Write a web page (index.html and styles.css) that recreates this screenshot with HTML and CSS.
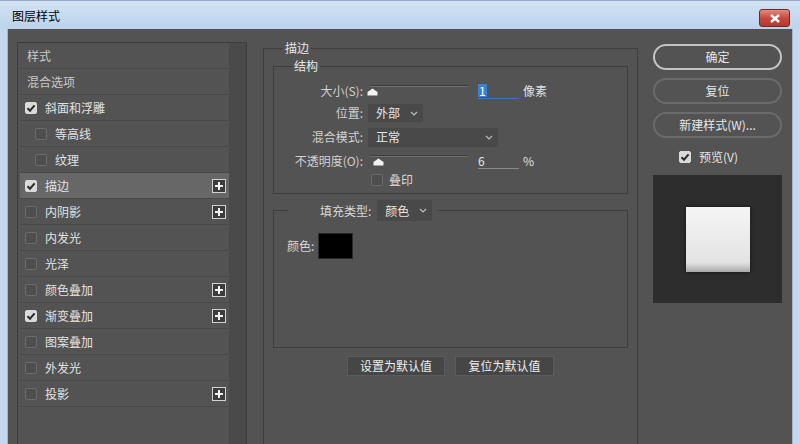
FILE: index.html
```html
<!DOCTYPE html>
<html lang="zh-CN">
<head>
<meta charset="utf-8">
<title>图层样式</title>
<link rel="stylesheet" href="styles.css">
</head>
<body>
<div class="window">
  <header class="titlebar">
    <span class="title">图层样式</span>
    <button class="close" aria-label="关闭"><svg width="12" height="9" viewBox="0 0 12 9"><path d="M2 1 L10 8 M10 1 L2 8" stroke="#fff" stroke-width="2.4"/></svg></button>
  </header>
  <div class="client">
    <aside class="sidebar">
      <ul class="list">
        <li class="row heading">样式</li>
        <li class="row heading">混合选项</li>
        <li class="row"><span class="cb checked"><svg width="12" height="12" viewBox="0 0 12 12"><path d="M2.5 6.2 L5 8.7 L9.6 3.4" fill="none" stroke="#2b2b2b" stroke-width="2"/></svg></span><span>斜面和浮雕</span></li>
        <li class="row sub"><span class="cb"></span><span>等高线</span></li>
        <li class="row sub"><span class="cb"></span><span>纹理</span></li>
        <li class="row active"><span class="cb checked"><svg width="12" height="12" viewBox="0 0 12 12"><path d="M2.5 6.2 L5 8.7 L9.6 3.4" fill="none" stroke="#2b2b2b" stroke-width="2"/></svg></span><span>描边</span><span class="plus"><svg width="12" height="12" viewBox="0 0 12 12"><path d="M6 2v8M2 6h8" stroke="#f2f2f2" stroke-width="2"/></svg></span></li>
        <li class="row"><span class="cb"></span><span>内阴影</span><span class="plus"><svg width="12" height="12" viewBox="0 0 12 12"><path d="M6 2v8M2 6h8" stroke="#f2f2f2" stroke-width="2"/></svg></span></li>
        <li class="row"><span class="cb"></span><span>内发光</span></li>
        <li class="row"><span class="cb"></span><span>光泽</span></li>
        <li class="row"><span class="cb"></span><span>颜色叠加</span><span class="plus"><svg width="12" height="12" viewBox="0 0 12 12"><path d="M6 2v8M2 6h8" stroke="#f2f2f2" stroke-width="2"/></svg></span></li>
        <li class="row"><span class="cb checked"><svg width="12" height="12" viewBox="0 0 12 12"><path d="M2.5 6.2 L5 8.7 L9.6 3.4" fill="none" stroke="#2b2b2b" stroke-width="2"/></svg></span><span>渐变叠加</span><span class="plus"><svg width="12" height="12" viewBox="0 0 12 12"><path d="M6 2v8M2 6h8" stroke="#f2f2f2" stroke-width="2"/></svg></span></li>
        <li class="row"><span class="cb"></span><span>图案叠加</span></li>
        <li class="row"><span class="cb"></span><span>外发光</span></li>
        <li class="row"><span class="cb"></span><span>投影</span><span class="plus"><svg width="12" height="12" viewBox="0 0 12 12"><path d="M6 2v8M2 6h8" stroke="#f2f2f2" stroke-width="2"/></svg></span></li>
      </ul>
      <div class="track"></div>
    </aside>

    <main class="main">
      <fieldset class="group outer">
        <legend>描边</legend>
        <fieldset class="group struct">
          <legend>结构</legend>
          <div class="frow r1">
            <span class="flabel">大小(S):</span>
            <div class="slider"><span class="thumb" style="left:-1px"><svg width="11" height="8" viewBox="0 0 11 8"><path d="M5.5 0.5 L10.5 4 V7.5 H0.5 V4 Z" fill="#f2f2f2"/></svg></span></div>
            <span class="field active"><span class="sel">1</span></span>
            <span class="unit">像素</span>
          </div>
          <div class="frow r2">
            <span class="flabel">位置:</span>
            <div class="select w55"><span>外部</span><svg width="8" height="5" viewBox="0 0 8 5"><path d="M1 1l3 3 3-3" fill="none" stroke="#bdbdbd" stroke-width="1.2"/></svg></div>
          </div>
          <div class="frow r3">
            <span class="flabel">混合模式:</span>
            <div class="select w130"><span>正常</span><svg width="8" height="5" viewBox="0 0 8 5"><path d="M1 1l3 3 3-3" fill="none" stroke="#bdbdbd" stroke-width="1.2"/></svg></div>
          </div>
          <div class="frow r4">
            <span class="flabel">不透明度(O):</span>
            <div class="slider"><span class="thumb" style="left:5px"><svg width="11" height="8" viewBox="0 0 11 8"><path d="M5.5 0.5 L10.5 4 V7.5 H0.5 V4 Z" fill="#f2f2f2"/></svg></span></div>
            <span class="field"><span class="val">6</span></span>
            <span class="unit">%</span>
          </div>
          <div class="frow r5">
            <span class="cb"></span><span class="flabel-plain">叠印</span>
          </div>
        </fieldset>

        <fieldset class="group fill">
          <legend><div class="legend-inner"><span class="flabel-plain">填充类型:</span><div class="select w55"><span>颜色</span><svg width="8" height="5" viewBox="0 0 8 5"><path d="M1 1l3 3 3-3" fill="none" stroke="#bdbdbd" stroke-width="1.2"/></svg></div></div></legend>
          <div class="colorrow"><span class="flabel-plain">颜色:</span><span class="swatch"></span></div>
        </fieldset>

        <div class="defaults">
          <button class="dbtn">设置为默认值</button>
          <button class="dbtn">复位为默认值</button>
        </div>
      </fieldset>
    </main>

    <div class="side">
      <button class="btn primary">确定</button>
      <button class="btn">复位</button>
      <button class="btn">新建样式(W)...</button>
      <div class="preview-row"><span class="cb checked"><svg width="12" height="12" viewBox="0 0 12 12"><path d="M2.5 6.2 L5 8.7 L9.6 3.4" fill="none" stroke="#2b2b2b" stroke-width="2"/></svg></span><span>预览(V)</span></div>
      <div class="preview"><div class="square"></div></div>
    </div>
  </div>
</div>
</body>
</html>
```

FILE: styles.css
```css
* { box-sizing: border-box; }
html, body { margin: 0; padding: 0; }
body {
  width: 800px;
  height: 444px;
  overflow: hidden;
  background: #c3d8ed;
  font-family: "Noto Sans CJK SC", "Liberation Sans", sans-serif;
  font-size: 12px;
  color: #e0e0e0;
}
button { font-family: inherit; font-size: 12px; cursor: default; }

.window { display: flex; flex-direction: column; height: 444px; }

.titlebar {
  height: 29px;
  flex: none;
  display: flex;
  align-items: flex-start;
  justify-content: space-between;
  background: linear-gradient(#d2e2f3, #bcd3eb);
  border-top: 1px solid #93abc7;
}
.title { color: #000; margin: 7px 0 0 12px; line-height: 16px; }
.close {
  width: 31px;
  height: 18px;
  margin: 8px 10px 0 0;
  padding: 0;
  border: 1px solid #6e2a22;
  border-radius: 3px;
  background: linear-gradient(#e58a80, #c9483d 50%, #b33a2f);
  display: flex;
  align-items: center;
  justify-content: center;
}

.client {
  flex: 1;
  min-height: 0;
  margin: 0 7px;
  border-left: 1px solid #9fb5cd;
  border-right: 1px solid #9fb5cd;
  background: #535353;
  display: flex;
  align-items: flex-start;
  padding-left: 9px;
  overflow: hidden;
}

/* sidebar list */
.sidebar {
  width: 230px;
  height: 420px;
  flex: none;
  margin-top: 13px;
  border: 1px solid #3d3d3d;
  padding-left: 2px;
  display: flex;
}
.list {
  width: 209px;
  margin: 0;
  padding: 0;
  list-style: none;
}
.track { width: 17px; background: #4a4a4a; }
.row {
  height: 26px;
  border-bottom: 1px solid #494949;
  display: flex;
  align-items: center;
  padding-left: 5px;
  line-height: 16px;
  color: #e2e2e2;
}
.row.heading { padding-left: 7px; color: #c9c9c9; }
.row.sub { padding-left: 15px; }
.row.active { background: #676767; }

.cb {
  width: 12px;
  height: 12px;
  flex: none;
  border: 1px solid #6b6b6b;
  border-radius: 2px;
  background: #4e4e4e;
  margin-right: 8px;
  display: flex;
}
.cb.checked { background: #dadada; border-color: #dadada; }
.cb.checked svg { margin: -1px; }

.plus {
  width: 14px;
  height: 14px;
  margin-left: auto;
  margin-right: 3px;
  border: 1px solid #d2d2d2;
  background: #3c3c3c;
  display: flex;
}

/* main */
.main { width: 375px; flex: none; margin: 11px 0 0 16px; }
.group { margin: 0; min-width: 0; border: 1px solid #3f3f3f; }
.group > legend { padding: 0 2px; line-height: 16px; color: #e6e6e6; }
.outer { padding: 2px 9px 0; height: 440px; }
.outer > legend { margin-left: 10px; }
.struct { padding: 7px 0 5px; }
.struct > legend { margin-left: 18px; }

.frow { display: flex; align-items: center; height: 20px; }
.r2 { margin-top: 2px; }
.r3 { margin-top: 4px; }
.r4 { margin-top: 4px; }
.r5 { margin-top: 1px; height: 16px; padding-left: 97px; }
.r5 .cb { margin-right: 6px; }
.flabel {
  width: 89px;
  flex: none;
  text-align: right;
  margin-right: 5px;
  color: #d0d0d0;
  line-height: 16px;
}
.flabel-plain { color: #d8d8d8; line-height: 16px; }

.slider { position: relative; width: 100px; height: 20px; flex: none; }
.slider::before {
  content: "";
  position: absolute;
  left: 2px;
  right: 0;
  top: 4px;
  height: 2px;
  background: linear-gradient(#3e3e3e 50%, #6e6e6e 50%);
}
.thumb { position: absolute; top: 7px; display: flex; }

.field {
  width: 41px;
  height: 16px;
  flex: none;
  margin-left: 10px;
  border-bottom: 1px solid #8a8a8a;
  line-height: 14px;
  color: #e6e6e6;
}
.field.active { border-bottom-color: #3a73c0; }
.sel {
  display: inline-block;
  height: 13px;
  margin-top: 1px;
  padding: 0 1px;
  background: #3b7fd6;
  color: #fff;
  line-height: 13px;
}
.val { display: inline-block; padding-top: 1px; }
.unit { margin-left: 4px; color: #e0e0e0; line-height: 16px; }

.select {
  height: 18px;
  flex: none;
  background: #494949;
  display: flex;
  align-items: center;
  justify-content: space-between;
  padding: 0 5px 0 8px;
  color: #e6e6e6;
  line-height: 16px;
}
.w55 { width: 55px; }
.w130 { width: 130px; height: 19px; }

.fill { margin-top: 6px; padding: 12px 0 88px; }
.fill > legend { margin-left: 14px; padding: 0 5px 0 32px; }
.legend-inner { display: flex; align-items: center; height: 21px; gap: 6px; }
.legend-inner .select { height: 21px; }

.colorrow { display: flex; align-items: center; height: 26px; padding-left: 13px; gap: 4px; }
.swatch { width: 35px; height: 26px; background: #000; border: 1px solid #2a2a2a; }

.defaults { display: flex; justify-content: center; gap: 10px; margin-top: 8px; }
.dbtn {
  width: 98px;
  height: 20px;
  padding: 0;
  background: #464646;
  border: 1px solid #5b5b5b;
  color: #ececec;
  line-height: 18px;
}
.dbtn + .dbtn { width: 99px; }

/* right column */
.side { width: 129px; flex: none; margin: 15px 0 0 15px; display: flex; flex-direction: column; }
.btn {
  height: 26px;
  padding: 0;
  border-radius: 13px;
  border: 2px solid #6b6b6b;
  background: transparent;
  color: #e6e6e6;
  margin-bottom: 8px;
  line-height: 20px;
}
.btn.primary { border-color: #c4c4c4; }
.preview-row { display: flex; align-items: center; height: 16px; margin-top: 3px; padding-left: 26px; color: #e6e6e6; line-height: 16px; }
.preview {
  height: 128px;
  margin-top: 10px;
  background: #2d2d2d;
  display: flex;
  align-items: center;
  justify-content: center;
}
.square {
  width: 64px;
  height: 65px;
  background: linear-gradient(#f5f5f5, #e3e3e3 85%, #c9c9c9 92%, #a8a8a8);
  box-shadow: 0 0 4px rgba(0, 0, 0, 0.6);
}
```
